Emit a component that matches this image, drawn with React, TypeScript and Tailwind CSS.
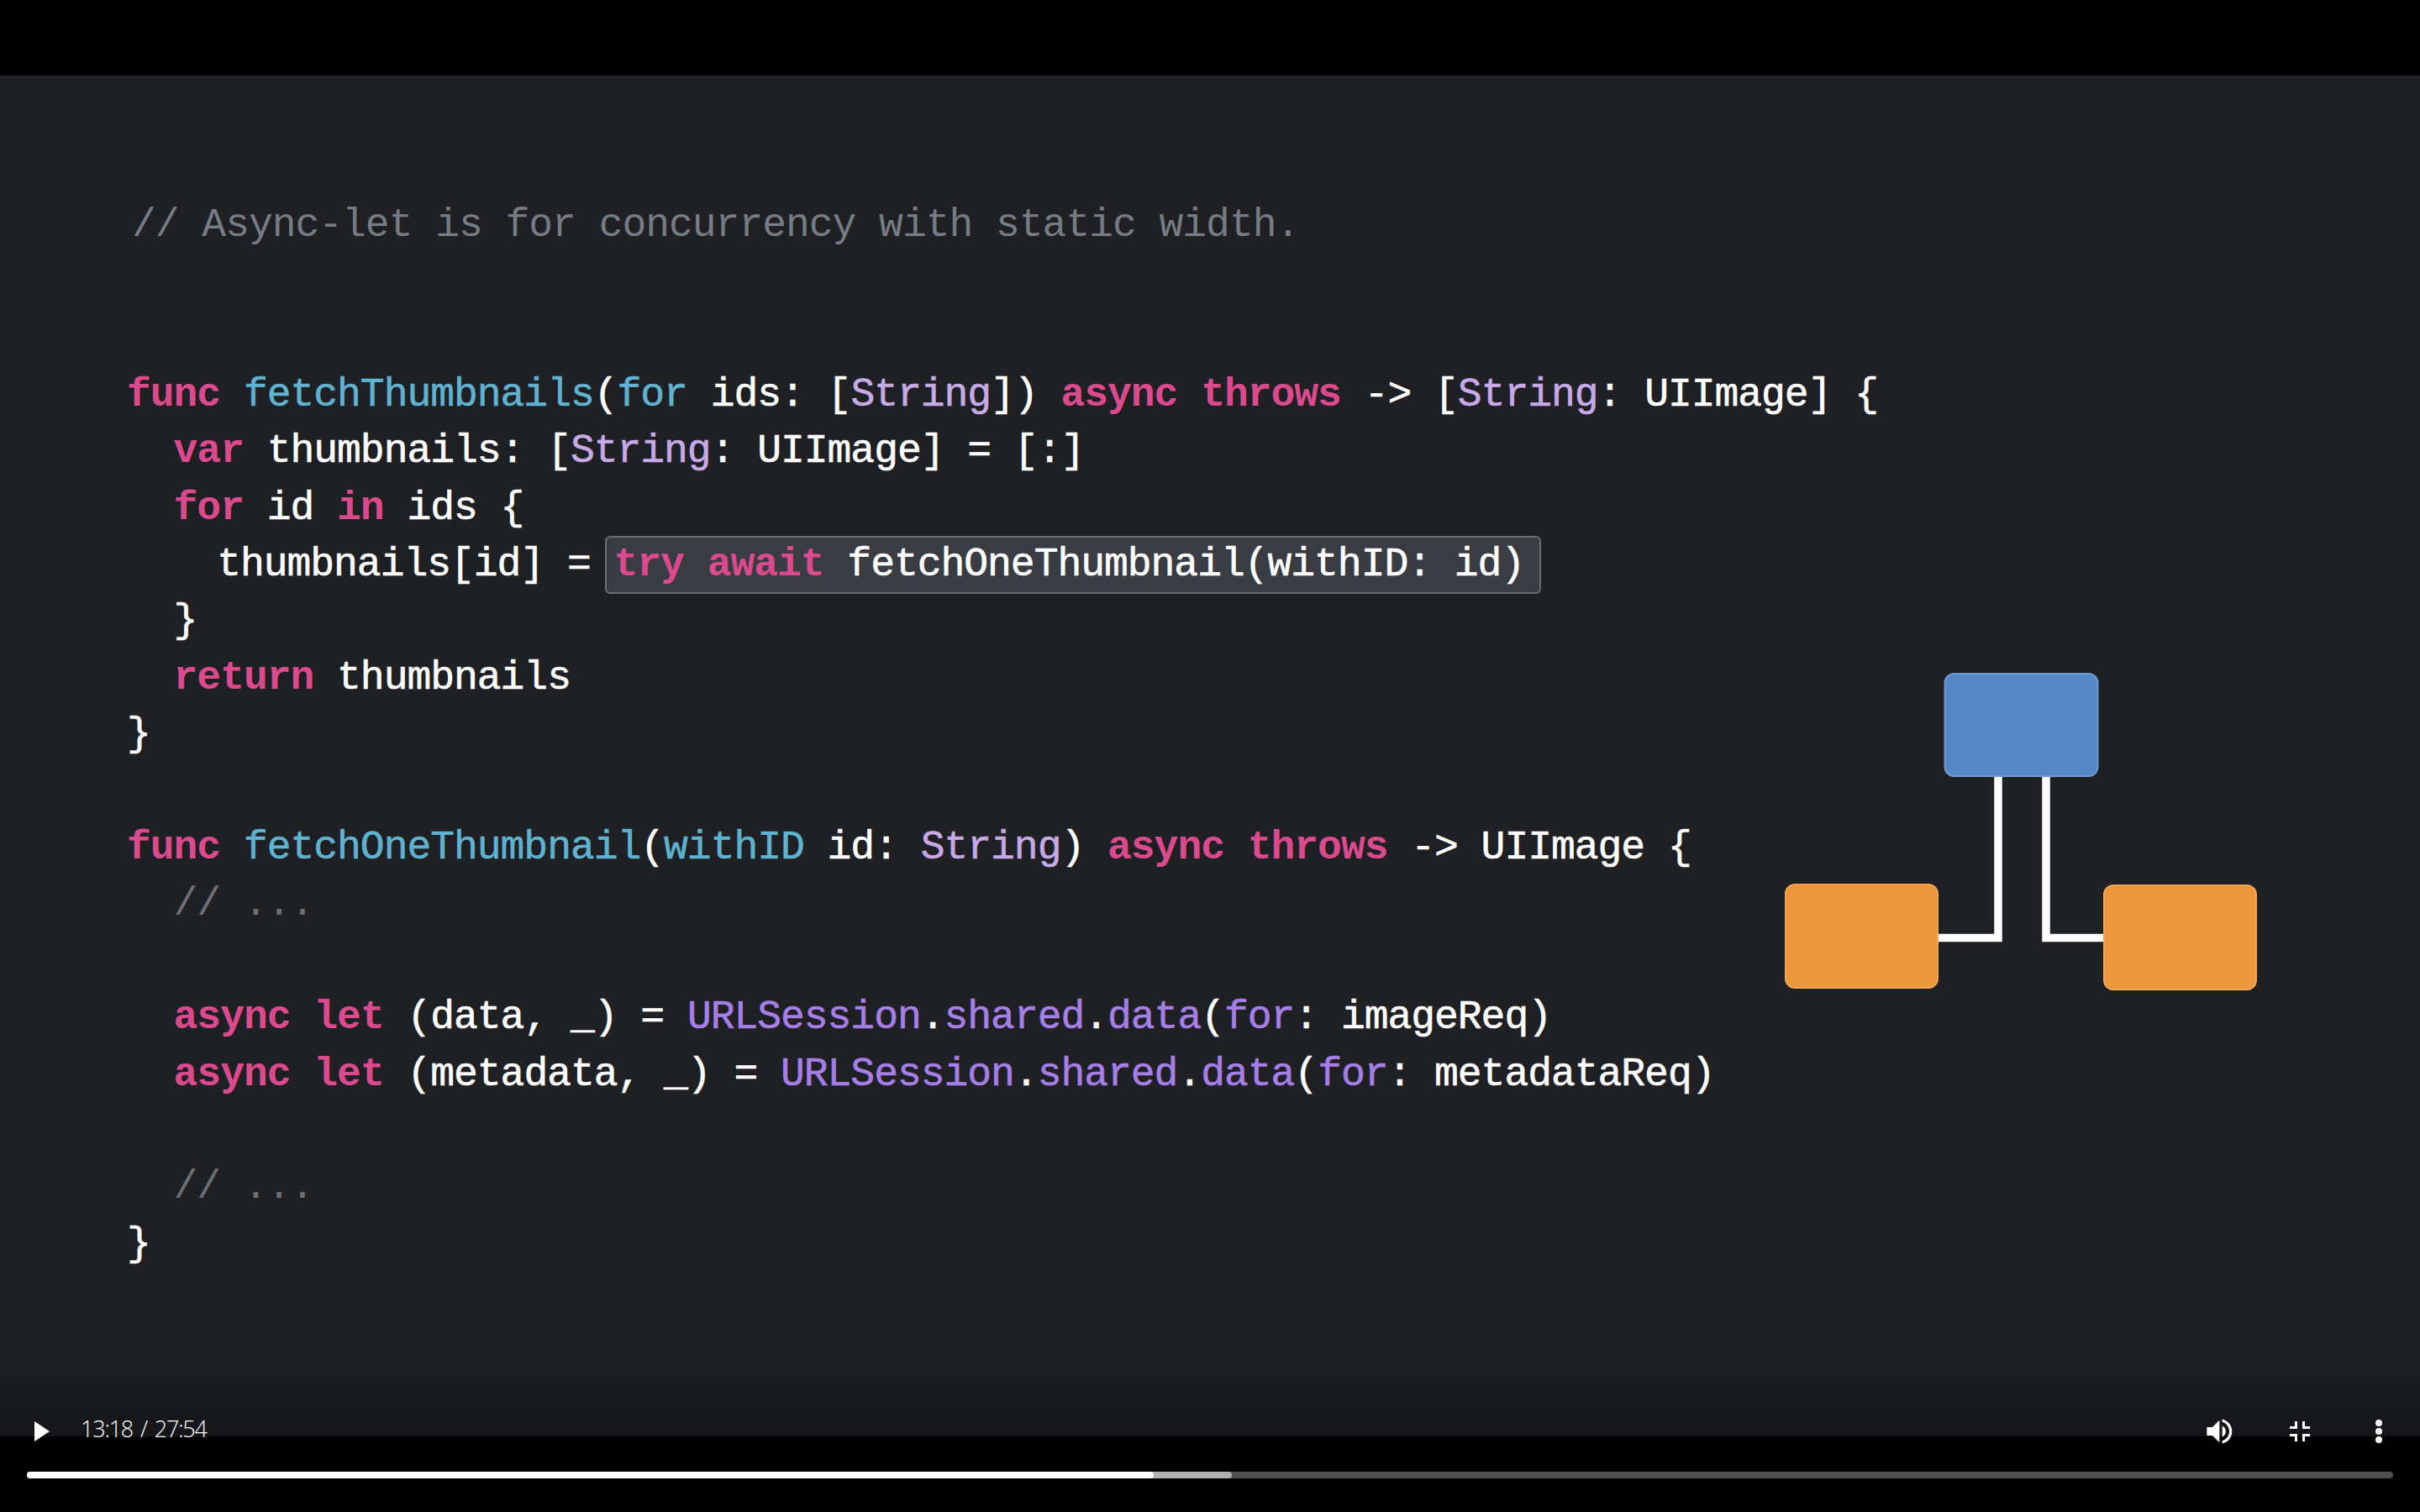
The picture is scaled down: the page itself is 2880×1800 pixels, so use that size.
import React from "react";

type Tok = [string, string?];
const P = "text-[#dc4a8e] font-bold [-webkit-text-stroke:0px]";
const B = "text-[#5fb2d0]";
const L = "text-[#c7a9e6]";
const V = "text-[#a67fe6]";
const C = "text-[#767c84] [-webkit-text-stroke:0px]";
const D = "text-[#6c7076] [-webkit-text-stroke:0px]";

const lines: Tok[][] = [
  [["// Async-let is for concurrency with static width.", C + " ml-[6px]"]],
  [],
  [],
  [["func", P], [" "], ["fetchThumbnails", B], ["("], ["for", B], [" ids: ["], ["String", L], ["]) "], ["async", P], [" "], ["throws", P], [" -> ["], ["String", L], [": UIImage] {"]],
  [["  "], ["var", P], [" thumbnails: ["], ["String", L], [": UIImage] = [:]"]],
  [["  "], ["for", P], [" id "], ["in", P], [" ids {"]],
  [["    thumbnails[id] = ", "-ml-[4px]"], ["BOX"]],
  [["  }"]],
  [["  "], ["return", P], [" thumbnails"]],
  [["}"]],
  [],
  [["func", P], [" "], ["fetchOneThumbnail", B], ["("], ["withID", B], [" id: "], ["String", L], [") "], ["async", P], [" "], ["throws", P], [" -> UIImage {"]],
  [["  "], ["// ...", D]],
  [],
  [["  "], ["async", P], [" "], ["let", P], [" (data, _) = "], ["URLSession", V], ["."], ["shared", V], ["."], ["data", V], ["("], ["for", V], [": imageReq)"]],
  [["  "], ["async", P], [" "], ["let", P], [" (metadata, _) = "], ["URLSession", V], ["."], ["shared", V], ["."], ["data", V], ["("], ["for", V], [": metadataReq)"]],
  [],
  [["  "], ["// ...", D]],
  [["}"]],
];

function Token({ t }: { t: Tok }) {
  if (t[0] === "BOX") {
    return (
      <span className="-ml-[10px] inline-flex h-[69px] items-center rounded-[6px] border-2 border-[#6b6d72] bg-[#3a3c43] pl-[8px] pr-[18px]">
        <span>
          <span className={P}>try</span> <span className={P}>await</span> fetchOneThumbnail(withID: id)
        </span>
      </span>
    );
  }
  return <span className={t[1]}>{t[0]}</span>;
}

export default function App() {
  return (
    <div className="flex h-[1800px] w-[2880px] flex-col overflow-hidden bg-black">
      <div className="h-[90px] shrink-0 bg-black" />
      <main className="relative flex h-[1620px] shrink-0 bg-[#1f2023]">
        <div className="w-[2124px] shrink-0 pl-[151px] pt-[144px] font-['Liberation_Mono',monospace] text-[48px] tracking-[-1.02px] text-white [-webkit-text-stroke:0.6px]">
          {lines.map((l, i) => (
            <div key={i} className="flex h-[67.4px] items-center whitespace-pre">
              {l.map((t, j) => (
                <Token key={j} t={t} />
              ))}
            </div>
          ))}
        </div>
        <svg className="mt-[711px] shrink-0" width="564" height="378" viewBox="0 0 564 378">
          <path d="M254 123V315.5H182M311 123V315.5H380" fill="none" stroke="#fff" strokeWidth="9.5" />
          <rect x="190.5" y="1" width="182" height="122" rx="11" fill="#5687c6" stroke="#6f9ad2" strokeWidth="2" />
          <rect x="1" y="252" width="181" height="123" rx="11" fill="#eb963d" stroke="#f2a553" strokeWidth="2" />
          <rect x="380" y="253" width="181" height="124" rx="11" fill="#eb963d" stroke="#f2a553" strokeWidth="2" />
        </svg>
        <div className="absolute inset-x-0 bottom-0 h-[100px] bg-gradient-to-b from-transparent to-[#141518]" />
      </main>
      <footer className="relative h-[90px] shrink-0 bg-black px-[32px] pt-[42px]">
        <div className="h-[8px] rounded-full bg-[#505050]">
          <div className="h-[8px] w-[1434px] rounded-full bg-[#b0b0b0]">
            <div className="h-[8px] w-[1341px] rounded-full bg-white" />
          </div>
        </div>
        <div className="absolute left-[20px] right-[19px] top-[-36px] flex h-[60px] items-center justify-between">
          <div className="flex items-center">
            <svg width="60" height="60" viewBox="0 0 60 60">
              <path d="M21 18L39 30L21 42Z" fill="#fff" />
            </svg>
            <span className="ml-[16px] -mt-[6px] font-['Open_Sans',sans-serif] text-[27px] font-light text-white tracking-[-1.2px] [word-spacing:3px]">
              13:18 / 27:54
            </span>
          </div>
          <div className="flex items-center gap-[37px]">
            <svg width="60" height="60" viewBox="0 0 36 36">
              <path
                fill="#fff"
                d="M8,21 L12,21 L17,26 L17,10 L12,15 L8,15 L8,21 Z M19,14 L19,22 C20.48,21.32 21.5,19.77 21.5,18 C21.5,16.26 20.48,14.74 19,14 ZM19,11.29 C21.89,12.15 24,14.83 24,18 C24,21.17 21.89,23.85 19,24.71 L19,26.77 C23.01,25.86 26,22.28 26,18 C26,13.72 23.01,10.14 19,9.23 L19,11.29 Z"
              />
            </svg>
            <svg width="54" height="54" viewBox="0 0 36 36">
              <path
                fill="#fff"
                d="M14,14 L10,14 L10,16 L16,16 L16,10 L14,10 Z M22,14 L22,10 L20,10 L20,16 L26,16 L26,14 Z M20,26 L22,26 L22,22 L26,22 L26,20 L20,20 Z M14,26 L16,26 L16,20 L10,20 L10,22 L14,22 Z"
              />
            </svg>
            <svg width="60" height="60" viewBox="0 0 60 60">
              <circle cx="30" cy="20" r="4" fill="#fff" />
              <circle cx="30" cy="30" r="4" fill="#fff" />
              <circle cx="30" cy="40" r="4" fill="#fff" />
            </svg>
          </div>
        </div>
      </footer>
    </div>
  );
}
